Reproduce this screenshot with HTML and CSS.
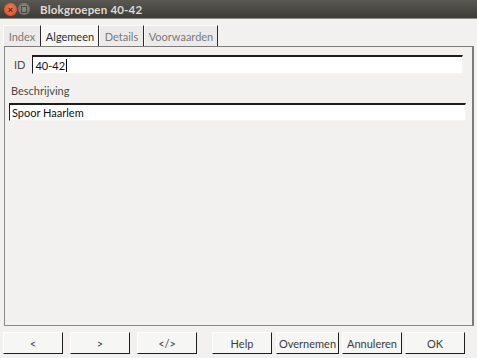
FILE: index.html
```html
<!DOCTYPE html>
<html lang="nl">
<head>
    <meta charset="UTF-8">
    <title>Blokgroepen 40-42</title>
    <link rel="stylesheet" href="styles.css">
</head>
<body>

    <!-- Titelbalk -->
    <div class="titlebar">
        <span class="win-btn close">&times;</span>
        <span class="win-btn minimize"></span>
        <span class="title">Blokgroepen 40-42</span>
    </div>

    <div class="tabs">
        <div class="tab tab-index">Index</div>
        <div class="tab tab-alg active">Algemeen</div>
        <div class="tab tab-det">Details</div>
        <div class="tab tab-voor">Voorwaarden</div>
    </div>

    <div class="panel">
        <div class="row">
            <label class="label">ID</label>
            <div class="field id-field">40-42<span class="caret"></span></div>
        </div>
        <div class="label desc-label">Beschrijving</div>
        <div class="field desc-field">Spoor Haarlem</div>
    </div>

    <div class="buttons">
        <button class="btn">&lt;</button>
        <button class="btn">&gt;</button>
        <button class="btn">&lt;/&gt;</button>
        <button class="btn help">Help</button>
        <button class="btn wide">Overnemen</button>
        <button class="btn">Annuleren</button>
        <button class="btn">OK</button>
    </div>

</body>
</html>
```

FILE: styles.css
```css
body {
    margin: 0;
    width: 477px;
    height: 358px;
    overflow: hidden;
    background: #f2f1f0;
    font-family: Lato, "Noto Sans", sans-serif;
    font-size: 11px;
    color: #3c3c3c;
}

/* Titelbalk */
.titlebar {
    height: 19px;
    background: linear-gradient(#5a5852, #3d3c37);
    border-bottom: 1px solid #8c8a84;
    display: flex;
    align-items: center;
    padding-left: 4px;
    box-sizing: border-box;
}
.win-btn {
    width: 13px;
    height: 13px;
    border-radius: 50%;
    margin-right: 1px;
    display: flex;
    align-items: center;
    justify-content: center;
    font-size: 10px;
    line-height: 1;
}
.close {
    background: radial-gradient(circle at 50% 40%, #f37a52, #d9471f);
    color: #5a200e;
    font-weight: bold;
}
.minimize {
    width: 12px;
    height: 12px;
    background: radial-gradient(circle at 50% 40%, #8e8c85, #6b6963);
}
.minimize::after {
    content: "";
    width: 4px;
    height: 5px;
    border: 1px solid #4c4a45;
}
.title {
    margin-left: 9px;
    color: #dfdbd2;
    font-weight: bold;
    font-size: 11.5px;
    letter-spacing: 0.2px;
}

/* Tabbladen */
.tabs {
    display: flex;
    padding: 6px 0 0 3px;
    height: 27px;
    box-sizing: border-box;
}
.tab {
    height: 21px;
    box-sizing: border-box;
    display: flex;
    align-items: center;
    justify-content: center;
    background: #ecebe9;
    color: #7a7a78;
    border-left: 1px solid #fbfbfa;
    border-top: 1px solid #fbfbfa;
    border-right: 1px solid #2a2a2a;
}
.tab-index { width: 38px; }
.tab-alg { width: 58px; }
.tab-det { width: 45px; }
.tab-voor { width: 74px; }
.tab.active {
    background: #f7f7f6;
    color: #2e2e2e;
}

.panel {
    margin: 0 3px 0 4px;
    height: 280px;
    box-sizing: border-box;
    border-top: 1px solid #7d7d7b;
    border-left: 1px solid #8a8a88;
    border-right: 2px solid #7a7a78;
    border-bottom: 1px solid #8a8a88;
    padding: 8px 6px 0 4px;
}
.row {
    display: flex;
    align-items: center;
}
.label {
    color: #4a4a48;
}
.row .label {
    margin: 0 7px 0 5px;
}
.field {
    background: #fff;
    color: #111;
    height: 19px;
    box-sizing: border-box;
    border-top: 2px solid #1e1e1e;
    border-left: 1px solid #1e1e1e;
    border-right: 1px solid #f4f4f4;
    border-bottom: 1px solid #f4f4f4;
    padding-left: 2px;
    display: flex;
    align-items: center;
}
.id-field {
    flex: 1;
    margin-right: 3px;
}
.caret {
    display: inline-block;
    width: 1px;
    height: 13px;
    background: #000;
    margin-left: 1px;
}
.desc-label {
    margin: 10px 0 0 2px;
}
.desc-field {
    margin-top: 6px;
    height: 18px;
}

/* Knoppenbalk */
.buttons {
    display: flex;
    padding: 6px 0 0 3px;
    gap: 7px;
}
.btn {
    width: 60px;
    height: 22px;
    padding: 0;
    font-family: inherit;
    font-size: 11px;
    color: #3c3c3c;
    background: #f6f6f5;
    border: none;
    border-left: 1px solid #fdfdfd;
    border-top: 1px solid #fdfdfd;
    border-right: 1px solid #1e1e1e;
    border-bottom: 1px solid #1e1e1e;
}
.btn.help {
    margin-left: 8px;
}
.btn.wide {
    width: 63px;
    margin-left: -3px;
}
.btn.wide + .btn {
    margin-left: -4px;
}
.btn.wide + .btn + .btn {
    margin-left: -4px;
}
```
